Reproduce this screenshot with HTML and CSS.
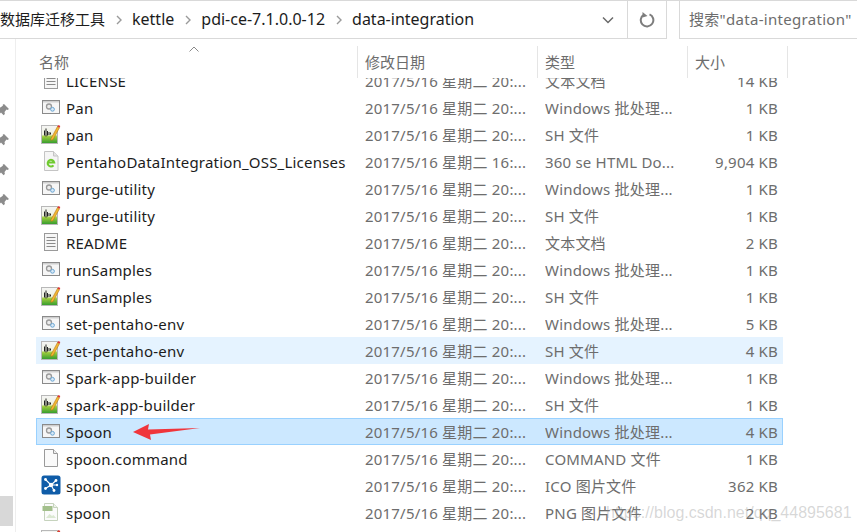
FILE: index.html
```html
<!DOCTYPE html>
<html lang="zh">
<head>
<meta charset="utf-8">
<title>data-integration</title>
<link rel="stylesheet" href="styles.css">
</head>
<body>
<svg class="defs" width="0" height="0" aria-hidden="true">
  <symbol id="bat" viewBox="0 0 20 20">
    <rect x="1.500" y="3.500" width="17" height="13" fill="#f6f6f6" stroke="#8a8a8a"/>
    <rect x="2" y="4" width="16" height="1.500" fill="#cfcfcf"/>
    <circle cx="8" cy="9.500" r="2.500" fill="#ececec" stroke="#9a9a9a" stroke-width="1.300"/>
    <circle cx="11.500" cy="12.300" r="1.900" fill="#d7e8f6" stroke="#6aa6d4"/>
  </symbol>
  <symbol id="sh" viewBox="0 0 20 20">
    <defs>
      <linearGradient id="shg" x1="0" y1="0" x2="0" y2="1">
        <stop offset="0" stop-color="#f5f5f5"/>
        <stop offset=".5" stop-color="#eef2df"/>
        <stop offset=".62" stop-color="#9ccb3c"/>
        <stop offset="1" stop-color="#2f9a2e"/>
      </linearGradient>
    </defs>
    <rect x="0.500" y="1.500" width="16" height="18" fill="url(#shg)" stroke="#b8b8b8"/>
    <path d="M3.500 6.500v5M5 4.500v8M6.500 7v4.500M8 8v3M9.500 8.500v2" stroke="#222" fill="none"/>
    <path d="M10 14.500l6.500-12 2 1.200-6.500 12-2.200.6z" fill="#f2b632" stroke="#a86a10" stroke-width=".5"/>
    <path d="M16.500 2.500l2 1.200.8-1.600-1.800-1z" fill="#d33"/>
  </symbol>
  <symbol id="txt" viewBox="0 0 20 20">
    <rect x="3.500" y="1.500" width="13" height="17" fill="#f6f6f6" stroke="#9a9a9a"/>
    <path d="M5.500 5.500h9M5.500 8.500h9M5.500 11.500h9M5.500 14.500h9" stroke="#8a8a8a" fill="none"/>
  </symbol>
  <symbol id="html" viewBox="0 0 20 20">
    <path d="M3.500 .5h9l4.500 4.500v14.500h-13.500z" fill="#f5f5f5" stroke="#c4c4c4"/>
    <path d="M12.500 .5v4.500h4.500" fill="#e4e4e4" stroke="#c4c4c4"/>
    <path d="M6.800 11.500h6.400A3.300 3.300 0 1 0 12.500 14.300" fill="none" stroke="#6fca2f" stroke-width="2"/>
  </symbol>
  <symbol id="file" viewBox="0 0 20 20">
    <path d="M3.500 1.500h9l4 4v13h-13z" fill="#fafafa" stroke="#9a9a9a"/>
    <path d="M12.500 1.500v4h4" fill="#eee" stroke="#9a9a9a"/>
  </symbol>
  <symbol id="ico" viewBox="0 0 20 20">
    <rect x="0.500" y="0.500" width="19" height="19" rx="2.500" fill="#0f5ca8"/>
    <path d="M10 10L4.500 4.500M10 10l5-4.500M10 10l-5.500 3.500M10 10l3 5.500M10 10h6" stroke="#fff" stroke-width="1.100"/>
    <circle cx="10" cy="10" r="2.200" fill="#fff"/>
    <circle cx="4.500" cy="4.500" r="1.400" fill="#fff"/>
    <circle cx="15" cy="5.500" r="1.400" fill="#fff"/>
    <circle cx="4.500" cy="13.500" r="1.400" fill="#fff"/>
    <circle cx="13" cy="15.500" r="1.400" fill="#fff"/>
    <circle cx="16" cy="10" r="1.200" fill="#fff"/>
  </symbol>
  <symbol id="png" viewBox="0 0 20 20">
    <path d="M3.500 1.500h9l4 4v13h-13z" fill="#fbfbfb" stroke="#c6d3bd"/>
    <path d="M12.500 1.500v4h4" fill="#eef3ea" stroke="#c6d3bd"/>
    <rect x="1.500" y="4" width="10" height="5" fill="#a3c08c"/>
    <path d="M5 16l3.500-4 2.500 2 1.500-1 2.500 3z" fill="#dbe8d2"/>
  </symbol>
  <symbol id="pin" viewBox="0 0 12 12">
    <path d="M7 0l5 5-1.500 1-1-.4L7.500 8l.4 2-1.300 1.200-2.600-2.600L0 12l-.5-.5 3.400-4.600L.3 4.300 1.500 3l2 .4L6 1.500 5.700.7z" fill="#8c8c8c"/>
  </symbol>
</svg>

<header class="toolbar">
  <nav class="address">
    <span class="crumb first">数据库迁移工具</span>
    <svg class="sep" viewBox="0 0 8 12"><path d="M2 2l4 4-4 4" fill="none" stroke="#9a9a9a" stroke-width="1.400"/></svg>
    <span class="crumb">kettle</span>
    <svg class="sep" viewBox="0 0 8 12"><path d="M2 2l4 4-4 4" fill="none" stroke="#9a9a9a" stroke-width="1.400"/></svg>
    <span class="crumb">pdi-ce-7.1.0.0-12</span>
    <svg class="sep" viewBox="0 0 8 12"><path d="M2 2l4 4-4 4" fill="none" stroke="#9a9a9a" stroke-width="1.400"/></svg>
    <span class="crumb">data-integration</span>
    <svg class="chevron" viewBox="0 0 12 8"><path d="M1 1.500l5 5 5-5" fill="none" stroke="#6a6a6a" stroke-width="1.500"/></svg>
    <span class="refresh">
      <svg viewBox="0 0 16 16" width="16" height="16"><path d="M5 2.600A6.300 6.300 0 1 0 10.500 2.300" fill="none" stroke="#7d7d7d" stroke-width="2"/><path d="M3.500 0v5.500l5-1.500z" fill="#7d7d7d"/></svg>
    </span>
  </nav>
  <div class="search">搜索"data-integration"</div>
</header>

<main class="content">
  <aside class="side">
    <svg class="pin"><use href="#pin"/></svg>
    <svg class="pin"><use href="#pin"/></svg>
    <svg class="pin"><use href="#pin"/></svg>
    <svg class="pin"><use href="#pin"/></svg>
    <div class="thumb"></div>
  </aside>
  <section class="files">
    <div class="head">
      <svg class="sort" viewBox="0 0 10 6"><path d="M.5 5.500L5 1l4.500 4.500" fill="none" stroke="#8a8a8a"/></svg>
      <div class="hcell hname">名称</div>
      <div class="hcell hdate">修改日期</div>
      <div class="hcell htype">类型</div>
      <div class="hcell hsize">大小</div>
    </div>
    <div class="list">
      <div class="rows">
        <div class="row"><svg class="icon"><use href="#txt"/></svg><span class="name">LICENSE</span><span class="cell">2017/5/16 星期二 20:...</span><span class="cell">文本文档</span><span class="size">14 KB</span></div>
        <div class="row"><svg class="icon"><use href="#bat"/></svg><span class="name">Pan</span><span class="cell">2017/5/16 星期二 20:...</span><span class="cell">Windows 批处理...</span><span class="size">1 KB</span></div>
        <div class="row"><svg class="icon"><use href="#sh"/></svg><span class="name">pan</span><span class="cell">2017/5/16 星期二 20:...</span><span class="cell">SH 文件</span><span class="size">1 KB</span></div>
        <div class="row"><svg class="icon"><use href="#html"/></svg><span class="name">PentahoDataIntegration_OSS_Licenses</span><span class="cell">2017/5/16 星期二 16:...</span><span class="cell">360 se HTML Do...</span><span class="size">9,904 KB</span></div>
        <div class="row"><svg class="icon"><use href="#bat"/></svg><span class="name">purge-utility</span><span class="cell">2017/5/16 星期二 20:...</span><span class="cell">Windows 批处理...</span><span class="size">1 KB</span></div>
        <div class="row"><svg class="icon"><use href="#sh"/></svg><span class="name">purge-utility</span><span class="cell">2017/5/16 星期二 20:...</span><span class="cell">SH 文件</span><span class="size">1 KB</span></div>
        <div class="row"><svg class="icon"><use href="#txt"/></svg><span class="name">README</span><span class="cell">2017/5/16 星期二 20:...</span><span class="cell">文本文档</span><span class="size">2 KB</span></div>
        <div class="row"><svg class="icon"><use href="#bat"/></svg><span class="name">runSamples</span><span class="cell">2017/5/16 星期二 20:...</span><span class="cell">Windows 批处理...</span><span class="size">1 KB</span></div>
        <div class="row"><svg class="icon"><use href="#sh"/></svg><span class="name">runSamples</span><span class="cell">2017/5/16 星期二 20:...</span><span class="cell">SH 文件</span><span class="size">1 KB</span></div>
        <div class="row"><svg class="icon"><use href="#bat"/></svg><span class="name">set-pentaho-env</span><span class="cell">2017/5/16 星期二 20:...</span><span class="cell">Windows 批处理...</span><span class="size">5 KB</span></div>
        <div class="row hover"><svg class="icon"><use href="#sh"/></svg><span class="name">set-pentaho-env</span><span class="cell">2017/5/16 星期二 20:...</span><span class="cell">SH 文件</span><span class="size">4 KB</span></div>
        <div class="row"><svg class="icon"><use href="#bat"/></svg><span class="name">Spark-app-builder</span><span class="cell">2017/5/16 星期二 20:...</span><span class="cell">Windows 批处理...</span><span class="size">1 KB</span></div>
        <div class="row"><svg class="icon"><use href="#sh"/></svg><span class="name">spark-app-builder</span><span class="cell">2017/5/16 星期二 20:...</span><span class="cell">SH 文件</span><span class="size">1 KB</span></div>
        <div class="row selected"><svg class="icon"><use href="#bat"/></svg><span class="name">Spoon</span><span class="cell">2017/5/16 星期二 20:...</span><span class="cell">Windows 批处理...</span><span class="size">4 KB</span>
          <svg class="arrow" viewBox="0 0 68 16"><path d="M0 8L16 0l-1 5.500L67 4 17 10.500 18 16z" fill="#f0353b"/></svg>
        </div>
        <div class="row"><svg class="icon"><use href="#file"/></svg><span class="name">spoon.command</span><span class="cell">2017/5/16 星期二 20:...</span><span class="cell">COMMAND 文件</span><span class="size">1 KB</span></div>
        <div class="row"><svg class="icon"><use href="#ico"/></svg><span class="name">spoon</span><span class="cell">2017/5/16 星期二 20:...</span><span class="cell">ICO 图片文件</span><span class="size">362 KB</span></div>
        <div class="row"><svg class="icon"><use href="#png"/></svg><span class="name">spoon</span><span class="cell">2017/5/16 星期二 20:...</span><span class="cell">PNG 图片文件</span><span class="size">2 KB</span></div>
        <div class="row"><svg class="icon"><use href="#sh"/></svg><span class="name"></span><span class="cell"></span><span class="cell"></span><span class="size"></span></div>
      </div>
    </div>
  </section>
</main>
<div class="watermark">https://blog.csdn.net/qq_44895681</div>
</body>
</html>
```
FILE: styles.css
```css
* { box-sizing: border-box; }
html, body { margin: 0; padding: 0; }
body {
  width: 857px;
  height: 532px;
  overflow: hidden;
  position: relative;
  background: #fff;
  font-family: "Noto Sans", "Noto Sans CJK SC", sans-serif;
  font-size: 15px;
  color: #1c1c1c;
}
.defs { position: absolute; }

.toolbar {
  display: flex;
  height: 39px;
  border-top: 1px solid #d9d9d9;
}
.address {
  width: 667px;
  display: flex;
  align-items: center;
  border-bottom: 1px solid #d9d9d9;
  border-right: 1px solid #d9d9d9;
}
.crumb {
  font-size: 16px;
  line-height: 34px;
  padding-bottom: 2px;
  white-space: nowrap;
}
.first { font-size: 15px; }
.sep { width: 8px; height: 12px; margin: 0 9.500px; flex: none; }
.chevron { width: 12px; height: 8px; margin-left: auto; margin-right: 13px; flex: none; }
.refresh {
  width: 39px;
  height: 38px;
  border-left: 1px solid #d9d9d9;
  display: flex;
  align-items: center;
  justify-content: center;
  flex: none;
}
.search {
  margin-left: 12px;
  flex: 1;
  padding-left: 9px;
  border-left: 1px solid #d9d9d9;
  border-bottom: 1px solid #d9d9d9;
  color: #6d6d6d;
  line-height: 36px;
  letter-spacing: .3px;
  white-space: nowrap;
  overflow: hidden;
}

.content { display: flex; height: 493px; }
.side {
  width: 16px;
  flex: none;
  border-right: 1px solid #eeeeee;
  display: flex;
  flex-direction: column;
  gap: 18px;
  padding-top: 65px;
  position: relative;
}
.pin { width: 12px; height: 12px; margin-left: -3px; flex: none; }
.thumb {
  position: absolute;
  left: 0;
  top: 457px;
  width: 13px;
  height: 30px;
  background: #d8d8d8;
}

.files { flex: 1; min-width: 0; display: flex; flex-direction: column; }
.head {
  height: 39px;
  display: flex;
  position: relative;
  padding-top: 7px;
  color: #6d6d6d;
  flex: none;
}
.sort { position: absolute; left: 173px; top: 7px; width: 10px; height: 6px; }
.hcell {
  height: 32px;
  border-right: 1px solid #e5e5e5;
  padding: 6px 0 0 7px;
  line-height: 20px;
  white-space: nowrap;
  flex: none;
}
.hname { width: 342px; padding-left: 23px; }
.hdate { width: 180px; }
.htype { width: 150px; }
.hsize { width: 100px; }

.list { flex: 1; overflow: hidden; position: relative; }
.rows { margin-top: -11px; }
.row {
  height: 27px;
  width: 747px;
  margin-left: 20px;
  display: grid;
  grid-template-columns: 30px 299px 180px 1fr 100px;
  align-items: center;
  padding-right: 5px;
  position: relative;
  color: #6d6d6d;
  letter-spacing: .2px;
  white-space: nowrap;
}
.row.hover { background: #e5f3ff; }
.row.selected { background: #cce8ff; outline: 1px solid #99d1ff; outline-offset: -1px; }
.icon { width: 20px; height: 20px; margin: 0 0 2px 5px; }
.name { color: #1c1c1c; }
.cell { overflow: hidden; }
.size { text-align: right; }
.arrow {
  position: absolute;
  left: 97px;
  top: 6px;
  width: 68px;
  height: 16px;
}
.watermark {
  position: absolute;
  left: 606px;
  top: 502px;
  font-family: "Liberation Sans", sans-serif;
  font-size: 16px;
  line-height: 22px;
  color: rgba(150, 150, 150, 0.38);
  white-space: nowrap;
}
```
